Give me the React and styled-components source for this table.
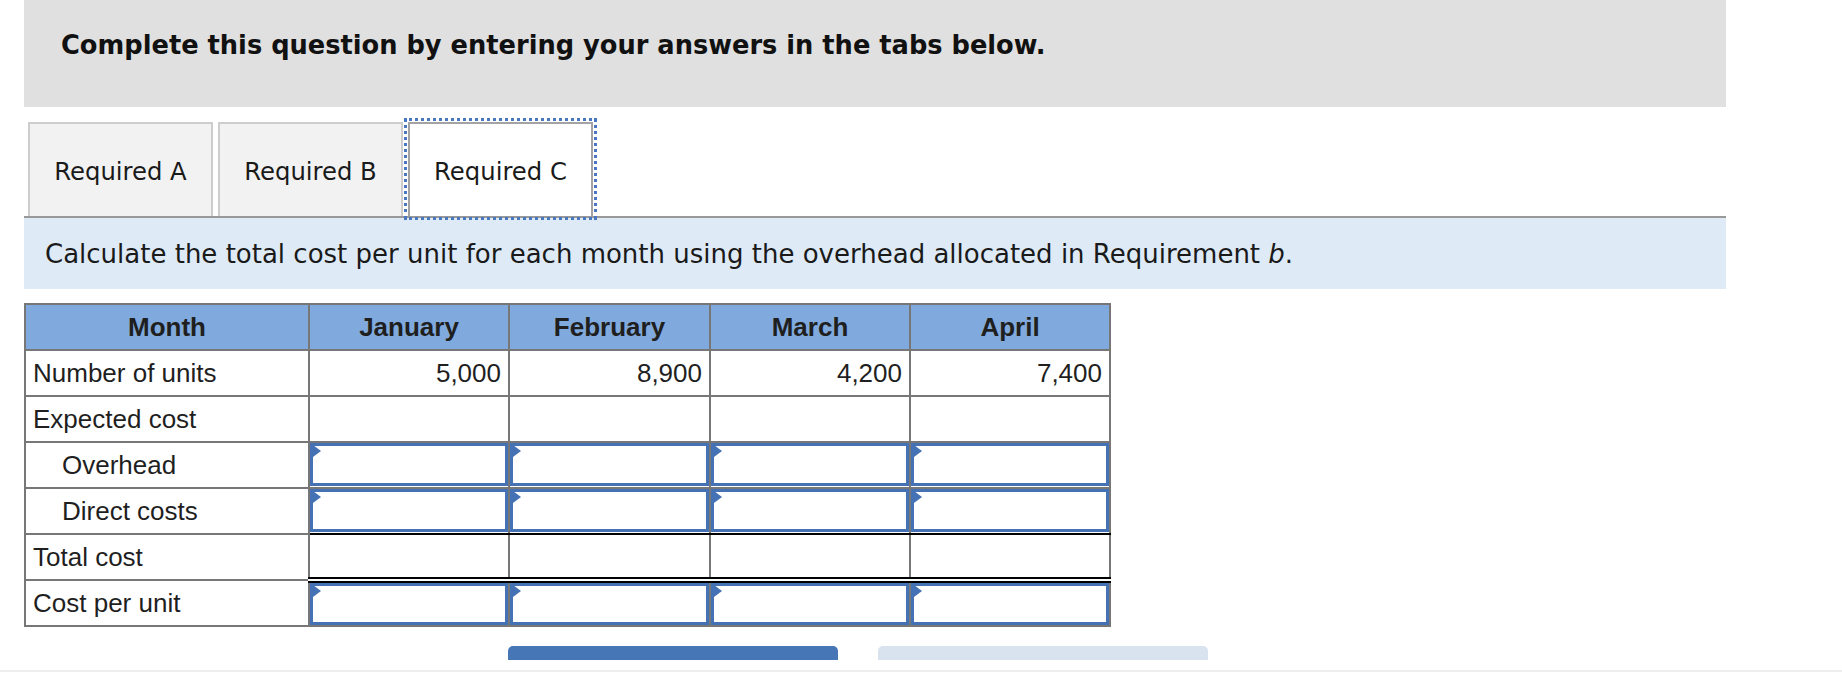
import styled, { createGlobalStyle } from 'styled-components';

const GlobalStyle = createGlobalStyle`
  html, body {
    margin: 0;
    padding: 0;
    background: #fff;
    color: #1c1c1c;
  }
`;

const Page = styled.div`
  width: 1842px;
  height: 682px;
  overflow: hidden;
`;

const Content = styled.div`
  width: 1702px;
  margin-left: 24px;
`;

const Banner = styled.div`
  height: 107px;
  box-sizing: border-box;
  padding: 30px 37px 0;
  background: #e0e0e0;
  font-family: 'DejaVu Sans', Verdana, sans-serif;
  font-weight: bold;
  font-size: 25.7px;
  line-height: 30px;
  color: #111;
`;

const TabList = styled.div`
  display: flex;
  gap: 5px;
  margin-top: 15px;
  padding-left: 4px;
  border-bottom: 2px solid #999;
`;

const Tab = styled.button`
  width: 185px;
  height: 94px;
  box-sizing: border-box;
  padding: 2px 0 0;
  display: flex;
  align-items: center;
  justify-content: center;
  font-family: 'DejaVu Sans', Verdana, sans-serif;
  font-size: 24.3px;
  color: #1a1a1a;
  cursor: pointer;
  background: ${p => (p.$active ? '#fff' : '#f2f2f2')};
  border: 2px solid ${p => (p.$active ? '#a3a3a3' : '#cdcdcd')};
  border-bottom: none;
  outline: ${p => (p.$active ? '3px dotted #4a78c0' : 'none')};
  outline-offset: 1px;
  position: relative;
  z-index: ${p => (p.$active ? 1 : 0)};
`;

const Prompt = styled.div`
  height: 71px;
  display: flex;
  align-items: center;
  padding-left: 21px;
  background: #deebf7;
  font-family: 'DejaVu Sans', Verdana, sans-serif;
  font-size: 26px;
  color: #1a1a1a;
  white-space: nowrap;
`;

const Table = styled.table`
  margin-top: 14px;
  border-collapse: collapse;
  table-layout: fixed;
  width: 1085px;
  font-family: 'Liberation Sans', Arial, sans-serif;
  font-size: 26px;
  color: #1f1f1f;
`;

const Th = styled.th`
  height: 44px;
  padding: 0;
  background: #80aadd;
  border: 2px solid #777;
  font-weight: bold;
  text-align: center;
`;

const Label = styled.td`
  height: 44px;
  padding: 0 0 0 ${p => (p.$indent ? '36px' : '7px')};
  border: 2px solid #777;
  white-space: nowrap;
`;

const Cell = styled.td`
  height: 44px;
  padding: 0 7px 0 0;
  border: 2px solid #777;
  text-align: right;
  vertical-align: middle;
`;

const TotalCell = styled.td`
  height: 42px;
  padding: 0;
  border: 2px solid #777;
  border-top-color: #000;
  border-bottom: 6px double #000;
`;

const InputCell = styled.td`
  height: ${p => (p.$afterTotal ? '42px' : '44px')};
  padding: 0;
  border: 2px solid #777;
  border-bottom-color: ${p => (p.$beforeTotal ? '#000' : '#777')};
  vertical-align: top;
`;

const Field = styled.div`
  position: relative;
  height: ${p => (p.$afterTotal ? '42px' : '43px')};

  &::before {
    content: '';
    position: absolute;
    top: 2px;
    left: 3px;
    border-left: 8px solid #4472b4;
    border-top: 6.5px solid transparent;
    border-bottom: 6.5px solid transparent;
  }
`;

const Input = styled.input`
  display: block;
  width: 100%;
  height: 100%;
  box-sizing: border-box;
  margin: 0;
  padding: 0 7px;
  border: 3px solid #4472b4;
  background: #fff;
  font: inherit;
  text-align: right;
  outline: none;
`;

const ButtonStrip = styled.div`
  display: flex;
  gap: 40px;
  height: 14px;
  margin-top: 19px;
  padding-left: 484px;
  overflow: hidden;
`;

const NavButton = styled.button`
  width: 330px;
  height: 44px;
  flex: none;
  border: none;
  border-radius: 5px;
  background: ${p => (p.$primary ? '#4676b6' : '#d9e3ef')};
`;

const Divider = styled.div`
  height: 2px;
  margin-top: 10px;
  background: #eeeeee;
`;

const months = ['January', 'February', 'March', 'April'];
const units = ['5,000', '8,900', '4,200', '7,400'];

const InputRow = ({ label, indent, beforeTotal, afterTotal }) => (
  <tr>
    <Label $indent={indent}>{label}</Label>
    {months.map(m => (
      <InputCell key={m} $beforeTotal={beforeTotal} $afterTotal={afterTotal}>
        <Field $afterTotal={afterTotal}>
          <Input type="text" aria-label={`${label} ${m}`} />
        </Field>
      </InputCell>
    ))}
  </tr>
);

export default function App() {
  return (
    <Page>
      <GlobalStyle />
      <Content>
        <Banner>Complete this question by entering your answers in the tabs below.</Banner>
        <TabList>
          <Tab>Required A</Tab>
          <Tab>Required B</Tab>
          <Tab $active>Required C</Tab>
        </TabList>
        <Prompt>
          Calculate the total cost per unit for each month using the overhead allocated in Requirement&nbsp;<i>b</i>.
        </Prompt>
        <Table>
          <colgroup>
            <col style={{ width: 284 }} />
            <col style={{ width: 200 }} />
            <col style={{ width: 201 }} />
            <col style={{ width: 200 }} />
            <col style={{ width: 200 }} />
          </colgroup>
          <thead>
            <tr>
              <Th>Month</Th>
              {months.map(m => <Th key={m}>{m}</Th>)}
            </tr>
          </thead>
          <tbody>
            <tr>
              <Label>Number of units</Label>
              {units.map(u => <Cell key={u}>{u}</Cell>)}
            </tr>
            <tr>
              <Label>Expected cost</Label>
              {months.map(m => <Cell key={m} />)}
            </tr>
            <InputRow label="Overhead" indent />
            <InputRow label="Direct costs" indent beforeTotal />
            <tr>
              <Label>Total cost</Label>
              {months.map(m => <TotalCell key={m} />)}
            </tr>
            <InputRow label="Cost per unit" afterTotal />
          </tbody>
        </Table>
        <ButtonStrip>
          <NavButton $primary aria-label="Previous" />
          <NavButton aria-label="Next" />
        </ButtonStrip>
      </Content>
      <Divider />
    </Page>
  );
}
